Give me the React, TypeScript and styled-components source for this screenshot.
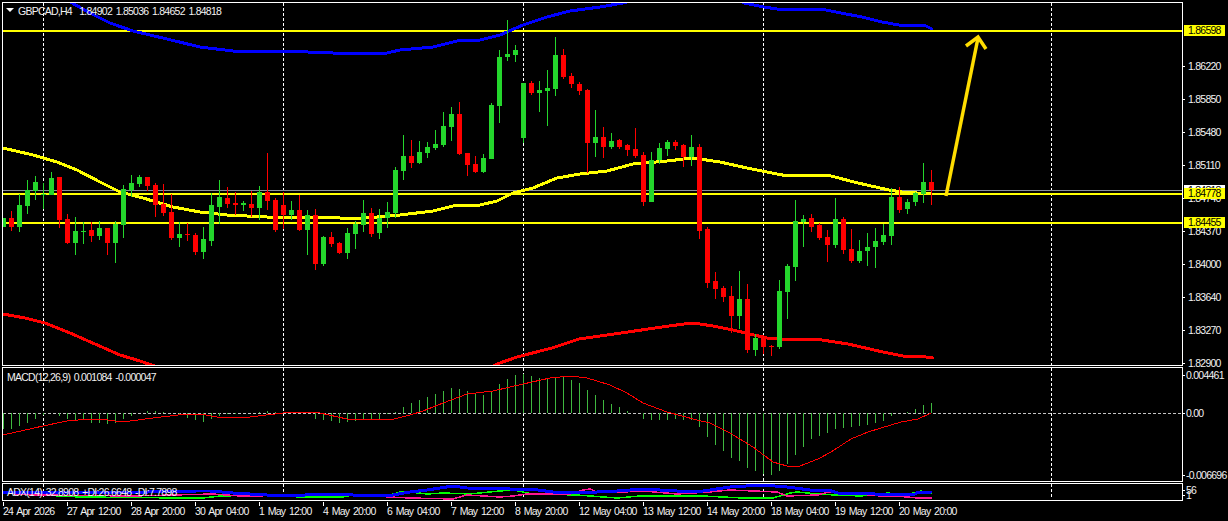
import { FC } from "react";
import styled, { createGlobalStyle } from "styled-components";

const GlobalStyle = createGlobalStyle`
  html, body {
    margin: 0;
    padding: 0;
    background: #000;
  }
`;

const Screen = styled.div`
  display: flex;
  width: 1228px;
  height: 521px;
  box-sizing: border-box;
  padding: 2px 0 0 2px;
  background: #000;
  color: #f2f2f2;
  overflow: hidden;
  font-family: "Liberation Sans", Arial, sans-serif;
  font-size: 10.5px;
  letter-spacing: -0.75px;
  word-spacing: 1.5px;
`;

const ChartColumn = styled.div`
  display: flex;
  flex-direction: column;
  gap: 1px;
  width: 1181px;
  flex: none;
`;

const Pane = styled.div<{ $height: number }>`
  position: relative;
  box-sizing: border-box;
  height: ${(p) => p.$height}px;
  border: 1px solid #fff;
  flex: none;
  svg {
    display: block;
    width: 100%;
    height: 100%;
  }
`;

const PaneTitle = styled.div<{ $top: number; $left: number }>`
  position: absolute;
  top: ${(p) => p.$top}px;
  left: ${(p) => p.$left}px;
  display: flex;
  align-items: center;
  white-space: pre;
  line-height: 12px;
`;

const Caret = styled.span`
  position: absolute;
  top: 3px;
  left: -12px;
  width: 0;
  height: 0;
  border-left: 4px solid transparent;
  border-right: 4px solid transparent;
  border-top: 4px solid #fff;
`;

const TimeAxis = styled.div`
  display: flex;
  height: 20px;
  padding-left: 1px;
  flex: none;
`;

const TimeTick = styled.div`
  position: relative;
  width: 64px;
  flex: none;
  padding-top: 3px;
  line-height: 12px;
  white-space: nowrap;
  &::before {
    content: "";
    position: absolute;
    left: 0;
    top: 0;
    width: 1px;
    height: 4px;
    background: #fff;
  }
`;

const AxisColumn = styled.div`
  position: relative;
  display: flex;
  flex-direction: column;
  gap: 1px;
  flex: 1;
`;

const AxisSection = styled.div<{ $height: number }>`
  height: ${(p) => p.$height}px;
  flex: none;
`;

const AxisLabel = styled.div<{ $mt: number; $indent?: number }>`
  position: relative;
  height: 12px;
  line-height: 12px;
  margin-top: ${(p) => p.$mt}px;
  padding-left: ${(p) => p.$indent ?? 5}px;
  white-space: nowrap;
  &::before {
    content: "";
    position: absolute;
    left: 0;
    top: 6px;
    width: 2px;
    height: 1px;
    background: #fff;
  }
`;

const PriceTag = styled.div<{ $top: number; $bg: string }>`
  position: absolute;
  top: ${(p) => p.$top}px;
  left: 1px;
  width: 41px;
  height: 11px;
  box-sizing: border-box;
  padding-left: 4px;
  line-height: 11px;
  color: #000;
  background: ${(p) => p.$bg};
`;

type Candle = ["g" | "r", number, number, number, number];

// wick top, body top, body bottom, wick bottom, one per bar in pixels
const candles: Candle[] = [
  ["g", 218, 218, 227, 227], ["r", 211, 218, 227, 231], ["g", 194, 205, 227, 232], ["g", 180, 190, 206, 214],
  ["g", 176, 182, 191, 200], ["g", 183, 194, 195, 209], ["g", 172, 178, 195, 195], ["r", 177, 177, 220, 228],
  ["r", 214, 219, 243, 244], ["g", 217, 231, 243, 255], ["g", 222, 231, 232, 244], ["r", 222, 230, 236, 242],
  ["g", 221, 228, 236, 240], ["r", 228, 228, 243, 255], ["g", 221, 224, 243, 263], ["g", 185, 189, 225, 238],
  ["g", 175, 183, 190, 197], ["g", 175, 177, 184, 187], ["r", 177, 177, 186, 191], ["r", 183, 185, 205, 217],
  ["r", 184, 204, 213, 216], ["r", 194, 212, 238, 240], ["g", 222, 234, 238, 247], ["r", 223, 234, 235, 241],
  ["r", 233, 235, 252, 255], ["g", 227, 239, 252, 259], ["g", 193, 205, 241, 246], ["g", 180, 197, 207, 224],
  ["r", 187, 198, 204, 208], ["r", 192, 203, 205, 215], ["g", 201, 203, 205, 211], ["r", 191, 204, 208, 217],
  ["g", 186, 192, 208, 220], ["r", 153, 192, 201, 210], ["r", 198, 200, 230, 232], ["r", 192, 205, 215, 229],
  ["g", 201, 210, 215, 220], ["r", 195, 210, 230, 231], ["g", 210, 215, 230, 255], ["r", 209, 215, 264, 270],
  ["g", 236, 237, 264, 266], ["r", 232, 237, 244, 247], ["r", 242, 243, 253, 254], ["g", 228, 233, 253, 259],
  ["g", 221, 224, 234, 249], ["g", 200, 213, 225, 232], ["r", 208, 213, 234, 237], ["g", 209, 218, 233, 239],
  ["g", 202, 212, 218, 228], ["g", 167, 170, 213, 218], ["g", 135, 156, 171, 180], ["r", 140, 156, 163, 168],
  ["g", 141, 152, 163, 164], ["g", 142, 147, 153, 158], ["g", 130, 144, 148, 150], ["g", 112, 126, 145, 147],
  ["g", 107, 114, 127, 141], ["r", 102, 114, 154, 155], ["r", 153, 153, 165, 176], ["r", 156, 164, 172, 173],
  ["g", 154, 158, 172, 173], ["g", 103, 105, 159, 159], ["g", 50, 57, 106, 123], ["g", 20, 54, 57, 61],
  ["g", 45, 50, 55, 62], ["g", 83, 83, 138, 143], ["r", 81, 83, 93, 95], ["g", 81, 90, 93, 112],
  ["g", 70, 88, 91, 126], ["g", 37, 55, 89, 96], ["r", 49, 55, 77, 79], ["r", 73, 76, 84, 88],
  ["r", 82, 84, 91, 95], ["r", 89, 90, 143, 173], ["g", 110, 137, 143, 157], ["r", 127, 137, 147, 158],
  ["g", 133, 141, 147, 149], ["r", 139, 140, 147, 149], ["r", 144, 145, 150, 156], ["r", 128, 149, 156, 158],
  ["r", 152, 155, 202, 206], ["g", 152, 160, 202, 202], ["g", 143, 148, 160, 164], ["g", 140, 142, 149, 156],
  ["r", 140, 142, 146, 150], ["r", 144, 145, 157, 167], ["g", 135, 147, 157, 166], ["r", 144, 147, 231, 239],
  ["r", 227, 229, 283, 288], ["r", 272, 281, 289, 299], ["r", 286, 288, 297, 302], ["r", 286, 296, 316, 333],
  ["g", 271, 299, 316, 329], ["r", 284, 299, 350, 353], ["g", 334, 338, 350, 356], ["r", 335, 337, 347, 354],
  ["r", 345, 346, 347, 356], ["g", 280, 291, 347, 349], ["g", 264, 266, 292, 319], ["g", 200, 221, 267, 281],
  ["g", 215, 219, 222, 247], ["r", 214, 218, 227, 232], ["r", 223, 225, 238, 240], ["r", 230, 237, 245, 262],
  ["g", 198, 219, 245, 248], ["r", 217, 219, 250, 254], ["r", 229, 249, 261, 263], ["g", 240, 251, 261, 263],
  ["g", 233, 247, 251, 266], ["g", 228, 241, 247, 268], ["g", 224, 235, 242, 245], ["g", 188, 197, 236, 245],
  ["r", 187, 197, 210, 213], ["g", 199, 202, 209, 214], ["g", 192, 193, 202, 206], ["g", 163, 182, 194, 203],
  ["r", 170, 182, 190, 205],
];

// how far the histogram reaches, pixel y of the bar end per bar
const macdBars = [
  429, 429, 426, 423, 419, 415, 413, 416, 419, 420, 420, 423, 423, 424, 423, 419, 416, 413, 411, 411, 411.5, 413,
  414, 418, 420, 422, 419, 416, 414, 414, 413, 413, 411.5, 411, 412, 413, 412, 411.5, 413, 419, 420, 421, 423, 422,
  421, 420, 420, 419, 414, 411.5, 407, 403, 400, 397, 394, 391, 388, 389, 391, 393, 395, 391, 384, 379, 375, 374,
  376, 378, 379, 377, 377, 380, 383, 390, 395, 400, 404, 407, 411, 413, 419, 420, 420, 420, 419, 420, 420, 427, 437,
  445, 451, 458, 461, 468, 471, 474, 475, 471, 464, 455, 447, 439, 436, 433, 429, 428, 427, 426, 425, 423, 421, 416,
  413, 412, 409, 405, 403,
];

const upperBand =
  "66,-1 72,3 90,13 110,23 133,31 167,39 200,47 233,51 283,51 333,53 387,53 400,50 433,47 457,41 480,40 500,35 523,25 547,17 570,11 600,7 623,3 640,-1 738,-1 744,3 764,7 777,9 821,9 841,13 862,17 882,22 899,25 926,26 932,29";
const middleLine =
  "3,148 33,155 57,162 77,170 100,182 120,192 143,198 173,207 200,212 227,215 267,217 333,217 347,219 377,217 400,215 433,211 457,205 480,205 497,201 513,193 533,188 557,178 580,174 607,171 633,164 667,161 693,158 720,162 747,168 777,174 788,176 811,175 831,176 858,183 889,190 902,192 932,194";
const lowerBand =
  "3,314 25,318 45,323 70,333 95,344 120,355 140,361 160,368 490,368 497,364 517,357 552,348 579,339 621,333 662,327 691,323 700,324 713,326 733,330 750,334 767,338 780,339 822,340 848,344 883,352 903,356 926,357 933,358";
const signalLine =
  "3,435 43,426 67,421 90,419 100,419 123,422 153,418 187,414 200,414 217,417 250,417 283,413 300,412 320,413 347,419 353,420 370,419 390,420 410,415 423,411 443,403 467,394 493,391 523,384 550,378 570,376 587,378 610,385 627,393 643,403 667,412 697,420 710,423 730,433 753,447 773,462 787,466 800,466 818,459 831,452 851,439 868,432 881,428 901,422 918,419 931,413";
const adxLine =
  "3,492 100,493 197,491 210,491 233,493 267,495 290,496 320,494 353,495 393,495 410,492 427,490 453,486 467,488 510,489 530,489 553,492 597,492 617,491 643,489 677,491 703,491 730,487 763,485 787,487 810,490 828,490 838,493 865,493 885,495 915,494 918,492 931,492";
const plusDi =
  "3,493 80,497 183,498 203,498 220,496 267,495 300,497 343,497 353,495 390,495 400,492 410,492 427,494 443,493 470,494 500,491 513,490 533,494 577,495 617,498 640,496 677,496 703,496 743,498 773,498 790,493 797,492 818,494 835,495 861,496 888,493 905,495 921,491 931,493";
const minusDi =
  "3,493 33,495 133,496 213,494 240,496 333,495 353,495 390,497 410,498 453,499 467,495 500,497 513,496 527,494 570,494 583,490 590,489 597,492 623,492 643,491 677,494 710,492 730,490 777,492 787,496 818,495 828,492 858,494 881,496 896,496 918,498 931,498";

const gridXs = [43.5, 283.5, 523.5, 763.5, 1051.5];

const priceLevels = ["1.86220", "1.85850", "1.85480", "1.85110", "1.84740", "1.84370", "1.84000", "1.83640", "1.83270", "1.82900"];
const timeLabels = [
  "24 Apr 2026", "27 Apr 12:00", "28 Apr 20:00", "30 Apr 04:00", "1 May 12:00", "4 May 20:00", "6 May 04:00",
  "7 May 12:00", "8 May 20:00", "12 May 04:00", "13 May 12:00", "14 May 20:00", "18 May 04:00", "19 May 12:00",
  "20 May 20:00",
];

const barX = (i: number) => 3 + 8 * i;

const Grid: FC<{ top: number; bottom: number }> = ({ top, bottom }) => (
  <>
    {gridXs.map((x) => (
      <line key={x} x1={x} x2={x} y1={top} y2={bottom} stroke="#fff" strokeDasharray="3 2" />
    ))}
  </>
);

const Line: FC<{ points: string; color: string; width: number }> = ({ points, color, width }) => (
  <polyline points={points} fill="none" stroke={color} strokeWidth={width} strokeLinejoin="round" strokeLinecap="round" />
);

const MainChart: FC = () => (
  <svg viewBox="3 3 1179 362" shapeRendering="crispEdges">
    <Grid top={3} bottom={365} />
    <rect x={3} y={190} width={1179} height={1} fill="#8a9098" />
    {[30, 193, 222].map((y) => (
      <rect key={y} x={3} y={y} width={1179} height={2} fill="#ffff00" />
    ))}
    <Line points={upperBand} color="#0000ff" width={3} />
    <Line points={middleLine} color="#ffff00" width={3} />
    <Line points={lowerBand} color="#ff0000" width={3} />
    {candles.map(([kind, wickTop, bodyTop, bodyBottom, wickBottom], i) => {
      const color = kind === "g" ? "#24d62c" : "#ff0000";
      return (
        <g key={i} fill={color}>
          <rect x={barX(i)} y={wickTop} width={1} height={wickBottom - wickTop} />
          <rect x={barX(i) - 2} y={bodyTop} width={5} height={Math.max(bodyBottom - bodyTop, 1)} />
        </g>
      );
    })}
    <g fill="none" stroke="#ffdd00" strokeWidth={3.5} shapeRendering="auto">
      <line x1={946} y1={196} x2={978} y2={38} />
      <polyline points="966,46 978,37 986,49" />
    </g>
  </svg>
);

const MacdChart: FC = () => (
  <svg viewBox="3 368 1179 113" shapeRendering="crispEdges">
    <Grid top={368} bottom={481} />
    <line x1={3} x2={1182} y1={413.5} y2={413.5} stroke="#c4c4c4" strokeDasharray="3 2" />
    {macdBars.map((y, i) => (
      <rect
        key={i}
        x={barX(i)}
        y={Math.min(y, 413)}
        width={1}
        height={Math.abs(y - 413)}
        fill="#3fb83f"
      />
    ))}
    <Line points={signalLine} color="#ff0000" width={1} />
  </svg>
);

const AdxChart: FC = () => (
  <svg viewBox="3 484 1179 16" shapeRendering="crispEdges">
    <Grid top={484} bottom={497} />
    <Line points={plusDi} color="#00ff00" width={1.5} />
    <Line points={minusDi} color="#ff1493" width={1.5} />
    <Line points={adxLine} color="#0000ff" width={3} />
  </svg>
);

const App: FC = () => (
  <>
    <GlobalStyle />
    <Screen>
      <ChartColumn>
        <Pane $height={364}>
          <MainChart />
          <PaneTitle $top={2} $left={15}>
            <Caret />
            {"GBPCAD,H4  1.84902 1.85036 1.84652 1.84818"}
          </PaneTitle>
        </Pane>
        <Pane $height={115}>
          <MacdChart />
          <PaneTitle $top={3} $left={4}>
            MACD(12,26,9) 0.001084 -0.000047
          </PaneTitle>
        </Pane>
        <Pane $height={18}>
          <AdxChart />
          <PaneTitle $top={2} $left={4}>
            ADX(14) 32.8908 +DI:26.6648 -DI:7.7898
          </PaneTitle>
        </Pane>
        <TimeAxis>
          {timeLabels.map((label) => (
            <TimeTick key={label}>{label}</TimeTick>
          ))}
        </TimeAxis>
      </ChartColumn>
      <AxisColumn>
        <AxisSection $height={364}>
          {priceLevels.map((price, i) => (
            <AxisLabel key={price} $mt={i === 0 ? 58 : 21}>
              {price}
            </AxisLabel>
          ))}
        </AxisSection>
        <AxisSection $height={115}>
          <AxisLabel $mt={2} $indent={3}>0.004461</AxisLabel>
          <AxisLabel $mt={26} $indent={3}>0.00</AxisLabel>
          <AxisLabel $mt={50} $indent={3}>-0.006696</AxisLabel>
        </AxisSection>
        <AxisSection $height={18}>
          <AxisLabel $mt={1} $indent={3}>56</AxisLabel>
          <AxisLabel $mt={-7} $indent={3}>1</AxisLabel>
        </AxisSection>
        <PriceTag $top={23} $bg="#ffff00">1.86598</PriceTag>
        <PriceTag $top={183} $bg="#ffffff">1.84818</PriceTag>
        <PriceTag $top={186} $bg="#ffff00">1.84778</PriceTag>
        <PriceTag $top={215} $bg="#ffff00">1.84455</PriceTag>
      </AxisColumn>
    </Screen>
  </>
);

export default App;
